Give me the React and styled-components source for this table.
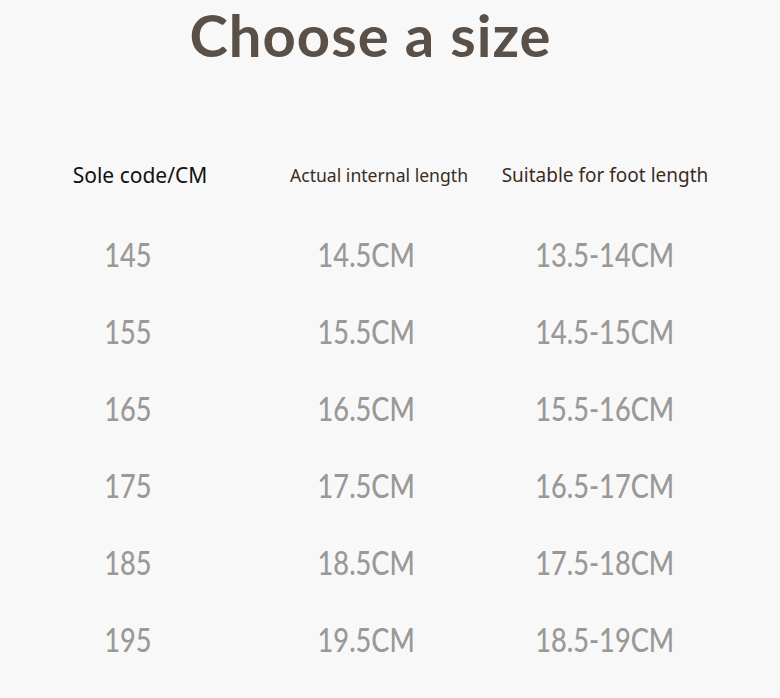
import React from "react";
import styled, { createGlobalStyle } from "styled-components";

const Global = createGlobalStyle`
  html, body { margin: 0; padding: 0; background: #f8f8f8; }
  body { font-family: "Lato", "Noto Sans", sans-serif; }
`;

const Page = styled.div`
  width: 780px;
  height: 698px;
  background: #f8f8f8;
  overflow: hidden;
`;

const Title = styled.h1`
  margin: 0;
  padding: 0;
  width: 741px;
  text-align: center;
  font-family: "Lato", sans-serif;
  font-weight: 700;
  font-size: 58px;
  line-height: 70px;
  color: #5a5047;
  letter-spacing: 1px;
`;

const Table = styled.div`
  display: grid;
  grid-template-columns: 256px 220px 258px;
  margin-top: 90px;
`;

const Head = styled.div`
  text-align: center;
  padding-left: ${(p) => p.$shift * 2}px;
  font-family: "Noto Sans", sans-serif;
  font-size: ${(p) => p.$size}px;
  line-height: 30px;
  color: ${(p) => (p.$main ? "#111" : "#3a2c1e")};
  white-space: nowrap;
  height: 56px;
`;

const Cell = styled.div`
  text-align: center;
  font-family: "Lato", sans-serif;
  font-weight: 500;
  font-size: 32px;
  line-height: 77px;
  color: #999999;
  white-space: nowrap;
`;

const Narrow = styled.span`
  display: inline-block;
  transform: scaleX(0.85);
`;

const rows = [
  ["145", "14.5CM", "13.5-14CM"],
  ["155", "15.5CM", "14.5-15CM"],
  ["165", "16.5CM", "15.5-16CM"],
  ["175", "17.5CM", "16.5-17CM"],
  ["185", "18.5CM", "17.5-18CM"],
  ["195", "19.5CM", "18.5-19CM"],
];

export default function App() {
  return (
    <Page>
      <Global />
      <Title>Choose a size</Title>
      <Table>
        <Head $main $size={21} $shift={12}>Sole code/CM</Head>
        <Head $size={17.6} $shift={13}>Actual internal length</Head>
        <Head $size={19} $shift={0}>Suitable for foot length</Head>
        {rows.map((r) =>
          r.map((v, i) => (
            <Cell key={r[0] + i}>
              <Narrow>{v}</Narrow>
            </Cell>
          ))
        )}
      </Table>
    </Page>
  );
}
